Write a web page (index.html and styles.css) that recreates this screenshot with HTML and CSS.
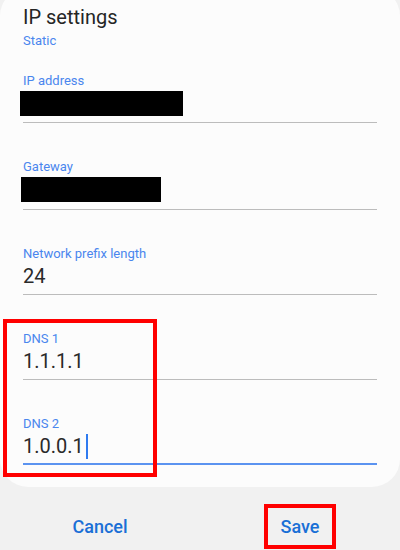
FILE: index.html
```html
<!DOCTYPE HTML>
<html>
    <head>
        <title>IP settings</title>
        <link rel="stylesheet" href="styles.css">
    </head>

    <body>
        <div class="card">
            <h1 class="title">IP settings</h1>
            <div class="mode">Static</div>

            <div class="field first">
                <div class="label">IP address</div>
                <div class="value"><div class="redact wide"></div></div>
            </div>

            <div class="field">
                <div class="label">Gateway</div>
                <div class="value"><div class="redact"></div></div>
            </div>

            <div class="field">
                <div class="label">Network prefix length</div>
                <div class="value">24</div>
            </div>

            <!-- DNS fields, marked with the red box -->
            <div class="dns">
                <div class="field">
                    <div class="label">DNS 1</div>
                    <div class="value">1.1.1.1</div>
                </div>

                <div class="field">
                    <div class="label">DNS 2</div>
                    <div class="value focused">1.0.0.1<span class="cursor"></span></div>
                </div>

                <div class="mark"></div>
            </div>
        </div>

        <div class="actions">
            <div class="slot"><span class="btn">Cancel</span></div>
            <div class="slot"><span class="btn marked">Save</span></div>
        </div>
    </body>
</html>
```

FILE: styles.css
```css
body {
    margin: 0;
    background-color: #f1f1f1;
    font-family: Roboto, "Liberation Sans", sans-serif;
}
.card {
    margin-top: -12px;
    padding: 17px 23px 22px 23px;
    background: #fcfcfc;
    border-radius: 28px;
}
.title {
    margin: 0;
    font-size: 20px;
    line-height: 24px;
    font-weight: 400;
    color: #252525;
}
.mode {
    margin-top: 4px;
    font-size: 13px;
    line-height: 16px;
    color: #4a86ee;
}
.field {
    margin-top: 36px;
}
.field.first {
    margin-top: 24px;
}
.field.first .value {
    height: 31px;
}
.label {
    font-size: 13px;
    line-height: 16px;
    color: #4a86ee;
}
.value {
    height: 32px;
    font-size: 20px;
    line-height: 28px;
    color: #2a2a2a;
    border-bottom: 1px solid #bcbcbc;
}
.value.focused {
    height: 31px;
    border-bottom: 2px solid #5b93f0;
}
.redact {
    width: 140px;
    height: 25px;
    margin: 2px 0 0 -2px;
    background: #000;
}
.redact.wide {
    width: 163px;
    margin-left: -3px;
}
.cursor {
    display: inline-block;
    width: 2px;
    height: 25px;
    margin-left: 2px;
    vertical-align: -6px;
    background: #2f7bf0;
}
.dns {
    position: relative;
}
.mark {
    position: absolute;
    top: -12px;
    left: -20px;
    bottom: -12px;
    width: 154px;
    box-sizing: border-box;
    border: 4px solid #ff0000;
}
.actions {
    display: flex;
    margin-top: 17px;
}
.slot {
    flex: 1;
    display: flex;
    justify-content: center;
}
.btn {
    padding: 8px 13px 7px 13px;
    border: 4px solid transparent;
    font-size: 18px;
    line-height: 22px;
    font-weight: 500;
    color: #1a6fd6;
}
.btn.marked {
    border-color: #ff0000;
}
```
